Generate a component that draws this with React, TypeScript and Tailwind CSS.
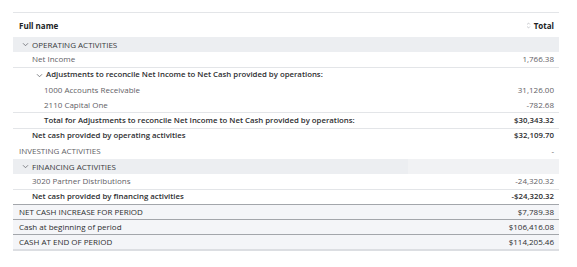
import React from 'react';

type Row = {
  label: string;
  amount?: string;
  indent: 0 | 1 | 2;
  chevron?: boolean;
  kind: 'section' | 'item' | 'bold' | 'plain' | 'grand';
  border?: 'light' | 'dark' | 'bottom';
  splitBg?: boolean;
};

const rows: Row[] = [
  { label: 'OPERATING ACTIVITIES', indent: 0, chevron: true, kind: 'section' },
  { label: 'Net Income', amount: '1,766.38', indent: 1, kind: 'item', border: 'light' },
  { label: 'Adjustments to reconcile Net Income to Net Cash provided by operations:', indent: 1, chevron: true, kind: 'bold' },
  { label: '1000 Accounts Receivable', amount: '31,126.00', indent: 2, kind: 'item' },
  { label: '2110 Capital One', amount: '-782.68', indent: 2, kind: 'item', border: 'light' },
  { label: 'Total for Adjustments to reconcile Net Income to Net Cash provided by operations:', amount: '$30,343.32', indent: 2, kind: 'bold', border: 'light' },
  { label: 'Net cash provided by operating activities', amount: '$32,109.70', indent: 1, kind: 'bold' },
  { label: 'INVESTING ACTIVITIES', amount: '-', indent: 0, kind: 'plain' },
  { label: 'FINANCING ACTIVITIES', indent: 0, chevron: true, kind: 'section', splitBg: true },
  { label: '3020 Partner Distributions', amount: '-24,320.32', indent: 1, kind: 'item', border: 'light' },
  { label: 'Net cash provided by financing activities', amount: '-$24,320.32', indent: 1, kind: 'bold', border: 'dark' },
  { label: 'NET CASH INCREASE FOR PERIOD', amount: '$7,789.38', indent: 0, kind: 'grand', border: 'dark' },
  { label: 'Cash at beginning of period', amount: '$106,416.08', indent: 0, kind: 'grand', border: 'dark' },
  { label: 'CASH AT END OF PERIOD', amount: '$114,205.46', indent: 0, kind: 'grand', border: 'bottom' },
];

function Chevron() {
  return (
    <svg viewBox="0 0 8 6" className="h-[5px] w-[7px]" fill="none" stroke="#6b6c72" strokeWidth="1">
      <path d="M1 1.5 L4 4.5 L7 1.5" />
    </svg>
  );
}

function SortIcon() {
  return (
    <svg viewBox="0 0 6 10" className="h-[7px] w-[5px]" fill="none" stroke="#a8abb1" strokeWidth="0.9">
      <path d="M1 3.5 L3 1.5 L5 3.5" />
      <path d="M1 6.5 L3 8.5 L5 6.5" />
    </svg>
  );
}

const padFor = (r: Row) => {
  if (r.indent === 0) return r.chevron ? 'pl-[9px]' : 'pl-[6px]';
  if (r.indent === 1) return r.chevron ? 'pl-[23px]' : 'pl-[19px]';
  return 'pl-[31px]';
};

export default function App() {
  return (
    <div className="h-[267px] w-[577px] bg-white pt-[12px] pl-[13px] font-['Open_Sans','Noto_Sans',sans-serif] text-[8px]">
      <div className="w-[546px]">
        <div className="flex h-[25px] items-center justify-between border-t border-[#e3e5e8] px-[6px] pr-[5px] pt-px font-bold text-[#212223]">
          <span>Full name</span>
          <span className="flex items-center gap-[3px]">
            <SortIcon />
            Total
          </span>
        </div>
        {rows.map((r) => {
          const bg =
            r.kind === 'section' ? 'bg-[#eceef1]' : r.kind === 'grand' ? 'bg-[#f4f5f8]' : 'bg-white';
          const border =
            r.border === 'light'
              ? 'border-b border-[#e3e5e8]'
              : r.border === 'dark'
                ? 'border-b border-[#a3a6ab]'
                : r.border === 'bottom'
                  ? 'border-b-2 border-[#dcdee2]'
                  : '';
          const text =
            r.kind === 'bold'
              ? 'text-[7.8px] font-semibold text-[#2d2e30]'
              : r.kind === 'item'
                ? 'text-[#5f6166]'
                : r.kind === 'plain'
                  ? 'text-[#5f6166]'
                  : r.kind === 'grand'
                    ? 'font-medium text-[#2d2e30]'
                    : 'text-[#393a3d]';
          return (
            <div key={r.label} className={`grid h-[15.25px] grid-cols-[395px_151px] box-border ${bg} ${border} ${text}`}>
              <div className={`flex items-center gap-[3px] whitespace-nowrap ${padFor(r)}`}>
                {r.chevron && <Chevron />}
                <span>{r.label}</span>
              </div>
              <div className={`flex items-center justify-end pr-[5px] ${r.splitBg ? 'bg-[#f1f2f4]' : ''}`}>
                {r.amount}
              </div>
            </div>
          );
        })}
      </div>
    </div>
  );
}
